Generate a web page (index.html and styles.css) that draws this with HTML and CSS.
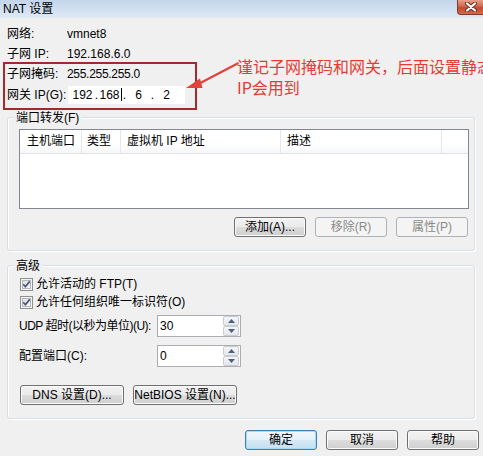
FILE: index.html
```html
<!DOCTYPE html>
<html lang="zh">
<head>
<meta charset="utf-8">
<title>NAT 设置</title>
<link rel="stylesheet" href="styles.css">
</head>
<body>
<div class="window">
  <div class="titlebar">
    <span class="title">NAT 设置</span>
    <div class="close">
      <svg width="14" height="10" viewBox="0 0 14 10">
        <path d="M3 1.5 L11 8.5 M11 1.5 L3 8.5" stroke="#6b2a22" stroke-width="4" stroke-linecap="round"/>
        <path d="M3 1.5 L11 8.5 M11 1.5 L3 8.5" stroke="#ffffff" stroke-width="2.2" stroke-linecap="round"/>
      </svg>
    </div>
  </div>

  <div class="info">
    <div class="row r1"><span class="lbl">网络:</span><span>vmnet8</span></div>
    <div class="row r2"><span class="lbl">子网 IP:</span><span>192.168.6.0</span></div>
    <div class="row r3"><span class="lbl">子网掩码:</span><span class="mask">255.255.255.0</span></div>
    <div class="row gw"><span class="lbl">网关 IP(G):</span>
      <div class="ipbox">
        <span class="oct">192</span><span class="dot">.</span><span class="oct">168<i class="caret"></i></span><span class="dot">.</span><span class="oct">6</span><span class="dot">.</span><span class="oct">2</span>
      </div>
    </div>
  </div>

  <div class="group g1">
    <div class="gtitle">端口转发(F)</div>
    <div class="listview">
      <div class="lvhead">
        <div class="col c1">主机端口</div>
        <div class="col c2">类型</div>
        <div class="col c3">虚拟机 IP 地址</div>
        <div class="col c4">描述</div>
        <div class="col c5"></div>
      </div>
    </div>
    <div class="btnrow">
      <div class="btn">添加(A)...</div>
      <div class="btn disabled">移除(R)</div>
      <div class="btn disabled">属性(P)</div>
    </div>
  </div>

  <div class="group g2">
    <div class="gtitle">高级</div>
    <div class="chk first">
      <svg class="box" width="13" height="13" viewBox="0 0 13 13">
        <defs><linearGradient id="cb" x1="0" y1="0" x2="1" y2="1"><stop offset="0" stop-color="#dcdcdc"/><stop offset="1" stop-color="#fbfbfb"/></linearGradient></defs>
        <rect x="0.5" y="0.5" width="12" height="12" fill="#f4f4f4" stroke="#8e8f8f"/>
        <rect x="2.5" y="2.5" width="8" height="8" fill="url(#cb)" stroke="#b8b8b8"/>
        <path d="M3.2 6.2 L5.4 8.6 L9.8 3.4" fill="none" stroke="#4a5a82" stroke-width="1.7"/>
      </svg>
      <span>允许活动的 FTP(T)</span>
    </div>
    <div class="chk">
      <svg class="box" width="13" height="13" viewBox="0 0 13 13">
        <rect x="0.5" y="0.5" width="12" height="12" fill="#f4f4f4" stroke="#8e8f8f"/>
        <rect x="2.5" y="2.5" width="8" height="8" fill="url(#cb)" stroke="#b8b8b8"/>
        <path d="M3.2 6.2 L5.4 8.6 L9.8 3.4" fill="none" stroke="#4a5a82" stroke-width="1.7"/>
      </svg>
      <span>允许任何组织唯一标识符(O)</span>
    </div>
    <div class="field f1">
      <span class="flbl tight">UDP 超时(以秒为单位)(U):</span>
      <div class="spin"><span class="val">30</span>
        <div class="arrows">
          <div class="arr"><svg width="7" height="4" viewBox="0 0 7 4"><path d="M0 4 L3.5 0 L7 4Z" fill="#4d6080"/></svg></div>
          <div class="arr"><svg width="7" height="4" viewBox="0 0 7 4"><path d="M0 0 L3.5 4 L7 0Z" fill="#4d6080"/></svg></div>
        </div>
      </div>
    </div>
    <div class="field f2">
      <span class="flbl">配置端口(C):</span>
      <div class="spin"><span class="val">0</span>
        <div class="arrows">
          <div class="arr"><svg width="7" height="4" viewBox="0 0 7 4"><path d="M0 4 L3.5 0 L7 4Z" fill="#4d6080"/></svg></div>
          <div class="arr"><svg width="7" height="4" viewBox="0 0 7 4"><path d="M0 0 L3.5 4 L7 0Z" fill="#4d6080"/></svg></div>
        </div>
      </div>
    </div>
    <div class="dnsrow">
      <div class="btn wide">DNS 设置(D)...</div>
      <div class="btn wide">NetBIOS 设置(N)...</div>
    </div>
  </div>

  <div class="footer">
    <div class="btn default">确定</div>
    <div class="btn">取消</div>
    <div class="btn">帮助</div>
  </div>

  <div class="redbox"></div>
  <svg class="arrow" width="60" height="40" viewBox="0 0 60 40">
    <path d="M55 4 L56 6 L14 28 L13 26 Z" fill="#e2413c"/>
    <path d="M3 30 L17 20.5 L19.5 30 Z" fill="#e2413c"/>
  </svg>
  <div class="note">谨记子网掩码和网关，后面设置静态<br>IP会用到</div>
</div>
</body>
</html>
```

FILE: styles.css
```css
* { box-sizing: border-box; }
html, body { margin: 0; padding: 0; }
body {
  width: 483px;
  height: 456px;
  overflow: hidden;
  background: #f0f0f0;
  font-family: "Liberation Sans", "Noto Sans CJK SC", sans-serif;
  font-size: 12px;
  color: #000;
}
.window {
  position: relative;
  width: 483px;
  height: 456px;
  overflow: hidden;
}

/* title bar */
.titlebar {
  position: relative;
  height: 18px;
  display: flex;
  align-items: center;
  padding-left: 3px;
  background: linear-gradient(#c3d5ea, #d6e4f3 70%, #dfe9f5);
}
.title { line-height: 14px; }
.close {
  position: absolute;
  right: 0;
  top: 0;
  width: 26px;
  height: 15px;
  display: flex;
  align-items: center;
  justify-content: center;
  border: 1px solid #7e3a2e;
  border-top: none;
  border-right: none;
  border-radius: 0 0 0 4px;
  background: linear-gradient(#e7a08d, #d0684e 45%, #c04a30 55%, #d86a48);
}

/* info rows */
.info { padding: 6px 0 0 7px; }
.row { display: flex; align-items: center; height: 20px; line-height: 14px; }
.row.r3 { height: 19px; }
.row.gw { height: 24px; }
.lbl { width: 60px; }
.mask { letter-spacing: -0.3px; }
.ipbox {
  display: flex;
  align-items: center;
  width: 117px;
  height: 18px;
  margin-left: 1px;
  padding-left: 3px;
  background: #fff;
}
.oct { width: 23px; text-align: center; line-height: 14px; position: relative; }
.dot { width: 5px; text-align: center; line-height: 14px; }
.caret {
  display: inline-block;
  width: 1px;
  height: 13px;
  background: #000;
  vertical-align: -2px;
  margin-left: 1px;
}

/* group boxes */
.group {
  margin: 10px 8px 0 7px;
  border: 1px solid #d5dfe5;
  border-radius: 3px;
  box-shadow: inset 1px 1px 0 #fff, 1px 1px 0 #fff;
}
.g2 { margin-top: 14px; padding-bottom: 13px; }
.gtitle {
  width: max-content;
  height: 14px;
  margin: -7px 0 0 6px;
  padding: 0 2px;
  line-height: 14px;
  background: #f0f0f0;
}

/* list view */
.listview {
  height: 80px;
  margin: 4px 5px 0 11px;
  border: 1px solid #828790;
  background: #fff;
}
.lvhead {
  display: flex;
  height: 24px;
  border-bottom: 1px solid #e3e4e6;
  background: linear-gradient(#ffffff, #ffffff 55%, #f6f7f9);
}
.col {
  height: 23px;
  line-height: 23px;
  border-right: 1px solid #e6e7e9;
  white-space: nowrap;
}
.c1 { width: 62px; padding-left: 7px; }
.c2 { width: 39px; padding-left: 5px; }
.c3 { width: 160px; padding-left: 6px; }
.c4 { width: 161px; padding-left: 6px; }
.c5 { flex: 1; border-right: none; }

.btnrow {
  display: flex;
  justify-content: flex-end;
  gap: 9px;
  margin: 8px 6px 13px 0;
}

/* buttons */
.btn {
  display: flex;
  align-items: center;
  justify-content: center;
  width: 72px;
  height: 20px;
  line-height: 14px;
  white-space: nowrap;
  border: 1px solid #707070;
  border-radius: 3px;
  background: linear-gradient(#f2f2f2 0%, #ebebeb 50%, #dddddd 51%, #cfcfcf 100%);
  box-shadow: inset 0 0 0 1px #fbfbfb;
}
.btn.disabled {
  border-color: #adb2b5;
  background: #f4f4f4;
  color: #8a8a8a;
  box-shadow: none;
}
.btn.default {
  border-color: #3c7fb1;
  box-shadow: inset 0 0 0 1px #a7dcf5;
  background: linear-gradient(#f0f7fb 0%, #e5f1f9 50%, #d4e8f4 51%, #c6e0f0 100%);
}
.btn.wide { width: 104px; }

/* checkboxes */
.chk {
  display: flex;
  align-items: center;
  height: 18px;
  padding-left: 12px;
  line-height: 14px;
}
.chk.first { margin-top: 2px; }
.chk .box { margin-right: 3px; flex: none; }

/* spinner fields */
.field {
  display: flex;
  align-items: center;
  height: 22px;
  padding-left: 11px;
  line-height: 14px;
}
.f1 { margin-top: 4px; }
.f2 { margin-top: 8px; }
.flbl { width: 138px; flex: none; white-space: nowrap; }
.flbl.tight { letter-spacing: -0.5px; }
.spin {
  display: flex;
  align-items: center;
  width: 84px;
  height: 22px;
  border: 1px solid #abadb3;
  background: #fff;
}
.val { flex: 1; padding-left: 2px; }
.arrows {
  display: flex;
  flex-direction: column;
  width: 16px;
  height: 20px;
  margin-right: 1px;
}
.arr {
  flex: 1;
  display: flex;
  align-items: center;
  justify-content: center;
  border: 1px solid #c9cdd3;
  border-radius: 2px;
  background: linear-gradient(#f4f5f7, #e4e7eb);
}

.dnsrow {
  display: flex;
  gap: 9px;
  margin-top: 18px;
  padding-left: 12px;
}

/* footer */
.footer {
  display: flex;
  justify-content: flex-end;
  gap: 9px;
  margin: 11px 4px 0 0;
}

/* annotation overlay */
.redbox {
  position: absolute;
  left: 3px;
  top: 62px;
  width: 194px;
  height: 48px;
  border: 2px solid #a4282d;
}
.arrow {
  position: absolute;
  left: 183px;
  top: 58px;
}
.note {
  position: absolute;
  left: 237px;
  top: 56px;
  font-family: "Noto Sans CJK SC", sans-serif;
  font-size: 16px;
  line-height: 21px;
  color: #e43b34;
  white-space: nowrap;
}
```
